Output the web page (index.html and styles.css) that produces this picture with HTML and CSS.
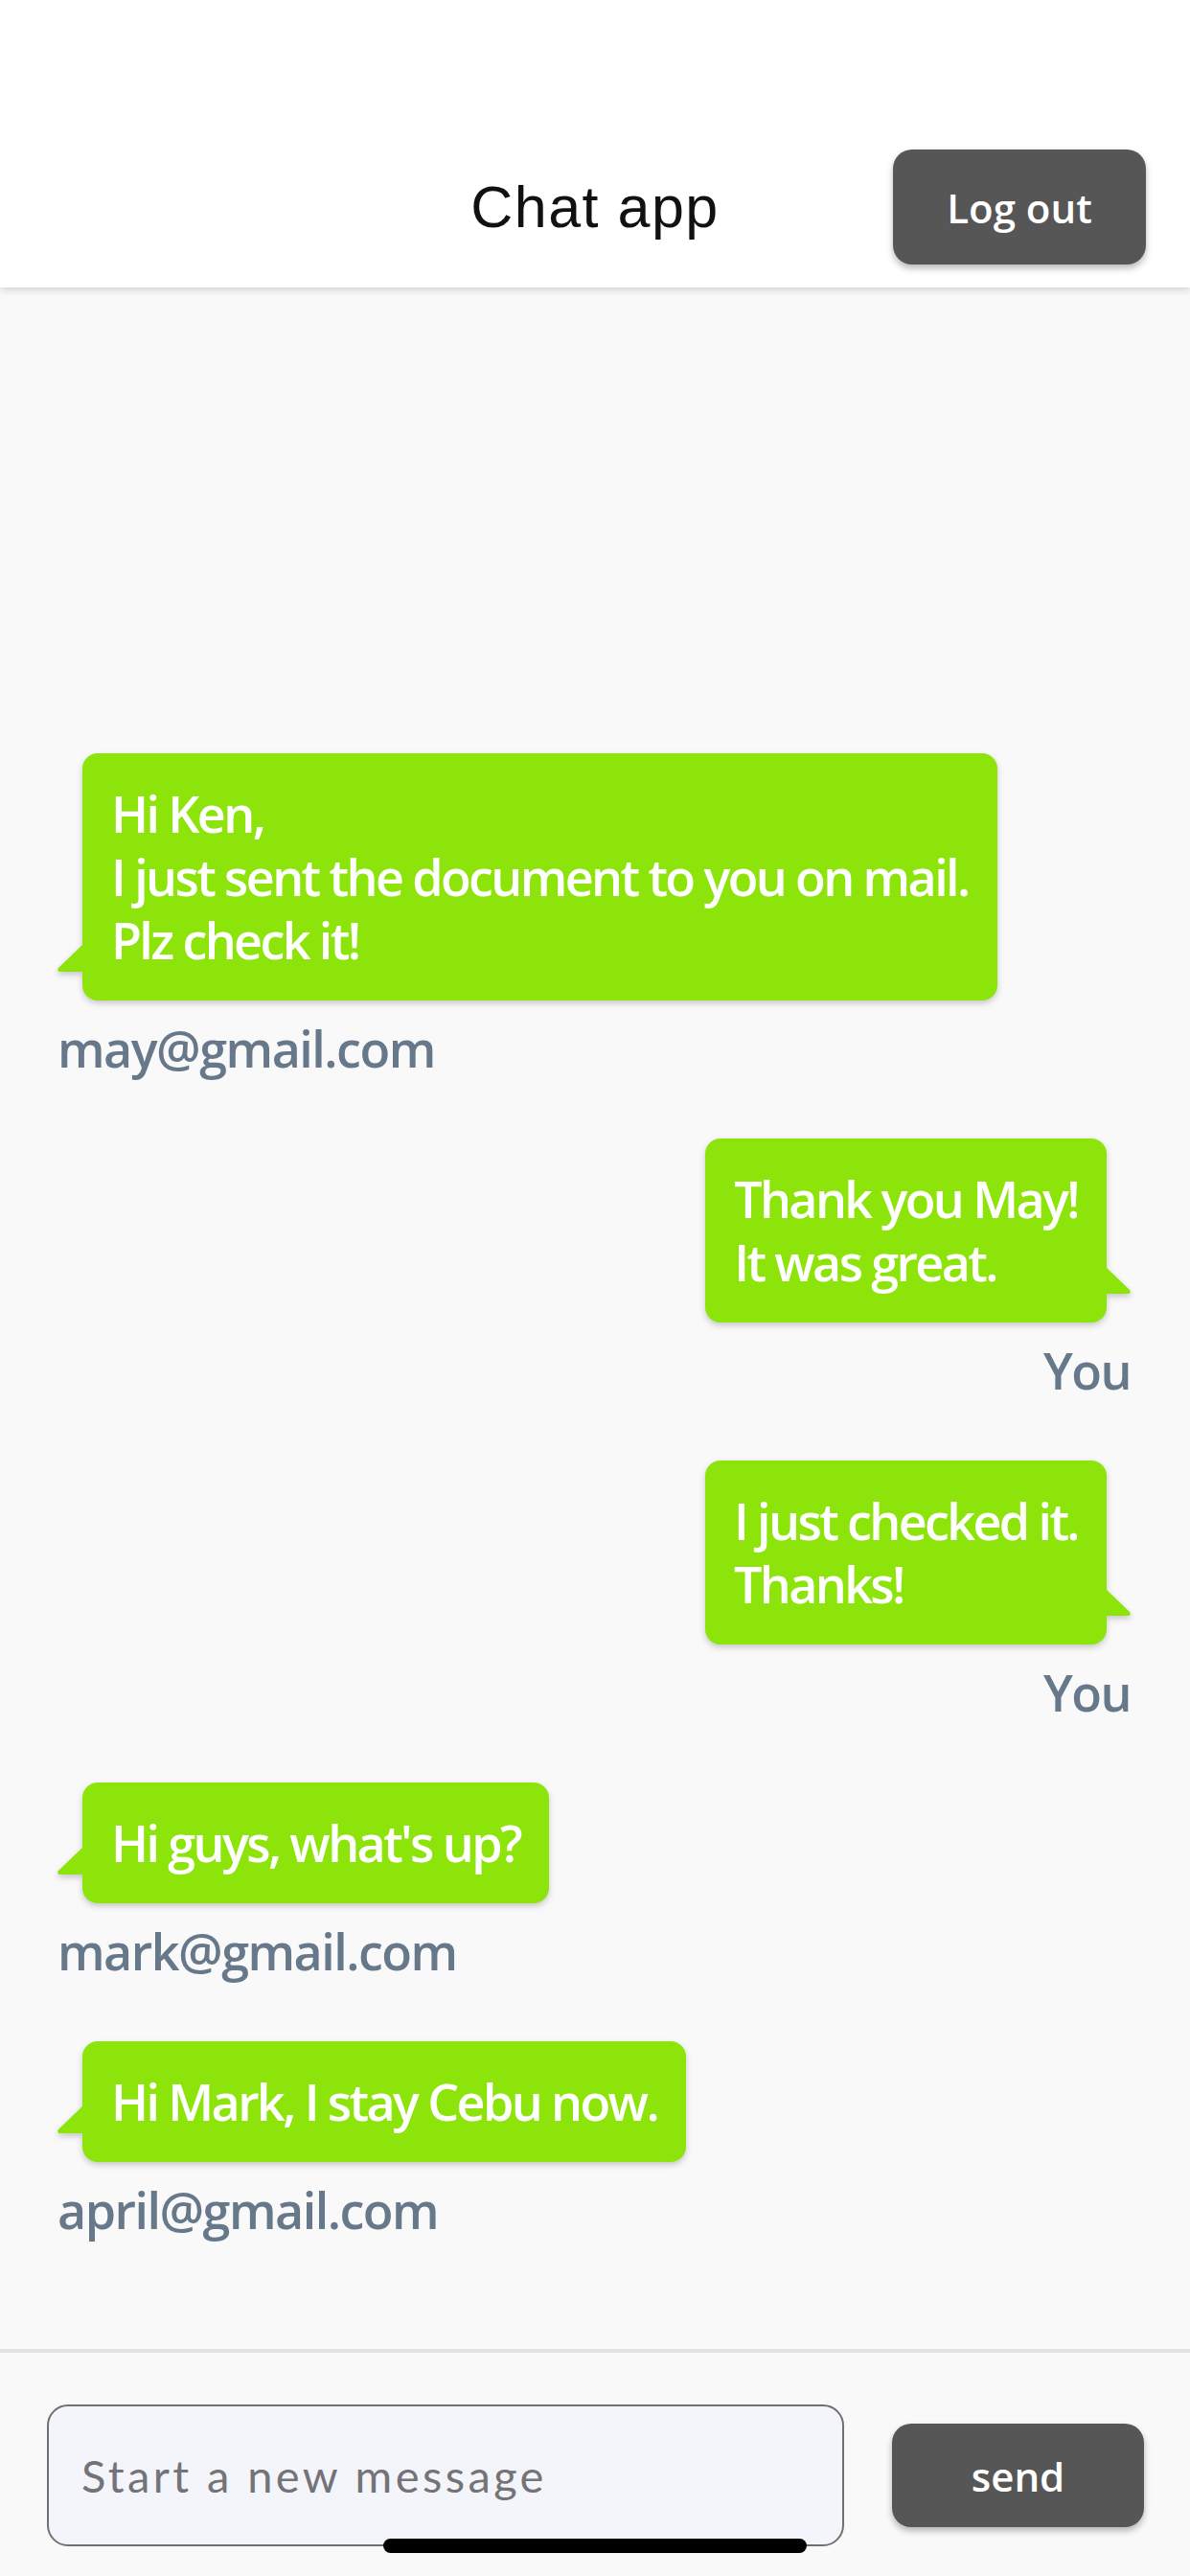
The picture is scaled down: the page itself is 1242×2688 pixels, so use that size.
FILE: index.html
```html
<!DOCTYPE html>
<html lang="en">
<head>
<meta charset="utf-8">
<title>Chat app</title>
<link rel="stylesheet" href="styles.css">
</head>
<body>
<div class="app">
  <header class="header">
    <div class="header-side"></div>
    <h1 class="title">Chat app</h1>
    <div class="header-side header-right">
      <button class="btn btn-logout">Log out</button>
    </div>
  </header>

  <main class="chat">
    <div class="msg msg-in">
      <div class="bubble">Hi Ken,<br>I just sent the document to you on mail.<br>Plz check it!</div>
      <div class="sender">may@gmail.com</div>
    </div>
    <div class="msg msg-out">
      <div class="bubble">Thank you May!<br>It was great.</div>
      <div class="sender">You</div>
    </div>
    <div class="msg msg-out">
      <div class="bubble">I just checked it.<br>Thanks!</div>
      <div class="sender">You</div>
    </div>
    <div class="msg msg-in">
      <div class="bubble">Hi guys, what's up?</div>
      <div class="sender">mark@gmail.com</div>
    </div>
    <div class="msg msg-in">
      <div class="bubble">Hi Mark, I stay Cebu now.</div>
      <div class="sender">april@gmail.com</div>
    </div>
  </main>

  <footer class="composer">
    <div class="textbox"><span class="placeholder">Start a new message</span></div>
    <button class="btn btn-send">send</button>
  </footer>

  <div class="home-indicator"></div>
</div>
</body>
</html>
```

FILE: styles.css
```css
* { box-sizing: border-box; }

html, body {
  margin: 0;
  padding: 0;
}

body {
  width: 1242px;
  height: 2688px;
  background: #f9f9f9;
  font-family: "Open Sans", "Noto Sans", sans-serif;
  overflow: hidden;
}

.app {
  position: relative;
  width: 1242px;
  height: 2688px;
  display: flex;
  flex-direction: column;
}

/* Header */
.header {
  position: relative;
  z-index: 2;
  height: 300px;
  flex: 0 0 300px;
  background: #ffffff;
  box-shadow: 0 2px 8px rgba(0, 0, 0, 0.18);
  display: grid;
  grid-template-columns: 1fr auto 1fr;
  align-items: center;
  padding: 156px 46px 24px 46px;
}

.title {
  margin: 0;
  font-family: "Liberation Sans", Arial, sans-serif;
  font-weight: 400;
  font-size: 61px;
  letter-spacing: 1.5px;
  color: #111111;
  line-height: 1;
}

.header-right {
  display: flex;
  justify-content: flex-end;
}

.btn {
  border: none;
  background: #565656;
  color: #ffffff;
  font-family: "Open Sans", "Noto Sans", sans-serif;
  font-weight: 600;
  font-size: 42px;
  border-radius: 20px;
  box-shadow: 0 4px 7px rgba(0, 0, 0, 0.28);
  padding: 0;
  display: flex;
  align-items: center;
  justify-content: center;
}

.btn-logout {
  width: 264px;
  height: 120px;
}

/* Chat area */
.chat {
  flex: 1 1 auto;
  display: flex;
  flex-direction: column;
  justify-content: flex-end;
  padding: 0 62px 112px 60px;
}

.msg {
  display: flex;
  flex-direction: column;
}

.msg + .msg {
  margin-top: 61px;
}

.msg-in { align-items: flex-start; }
.msg-out { align-items: flex-end; }

.bubble {
  position: relative;
  background: #8ce40a;
  color: #ffffff;
  font-size: 52px;
  font-weight: 600;
  letter-spacing: -2.6px;
  line-height: 66px;
  padding: 30px 30px 30px 30px;
  border-radius: 16px;
  filter: drop-shadow(0 3px 3px rgba(0, 0, 0, 0.2));
}

.msg-in .bubble { margin-left: 26px; }
.msg-out .bubble { margin-right: 25px; }

.bubble::before {
  content: "";
  position: absolute;
  bottom: 30px;
  width: 27px;
  height: 29px;
  background: #8ce40a;
}

.msg-in .bubble::before {
  left: -26px;
  clip-path: polygon(100% 0, 100% 100%, 4% 100%, 0 90%);
}

.msg-out .bubble::before {
  right: -25px;
  clip-path: polygon(0 0, 100% 90%, 96% 100%, 0 100%);
}

.sender {
  margin-top: 17px;
  font-size: 52px;
  line-height: 66px;
  font-weight: 600;
  color: #66788a;
  letter-spacing: -1.5px;
}

/* Composer */
.composer {
  flex: 0 0 237px;
  border-top: 4px solid #e2e2e2;
  display: flex;
  align-items: center;
  padding: 54px 48px 31px 49px;
}

.textbox {
  width: 832px;
  height: 148px;
  border: 2px solid #6f6f74;
  border-radius: 22px;
  background: #f4f5fa;
  display: flex;
  align-items: center;
  padding-left: 34px;
}

.placeholder {
  font-family: Lato, "Open Sans", sans-serif;
  font-size: 47px;
  letter-spacing: 3.4px;
  color: #737378;
}

.btn-send {
  margin-left: 50px;
  width: 263px;
  height: 108px;
}

.home-indicator {
  position: absolute;
  left: 50%;
  top: 2649px;
  width: 442px;
  height: 15px;
  margin-left: -221px;
  background: #000000;
  border-radius: 8px;
}
```
